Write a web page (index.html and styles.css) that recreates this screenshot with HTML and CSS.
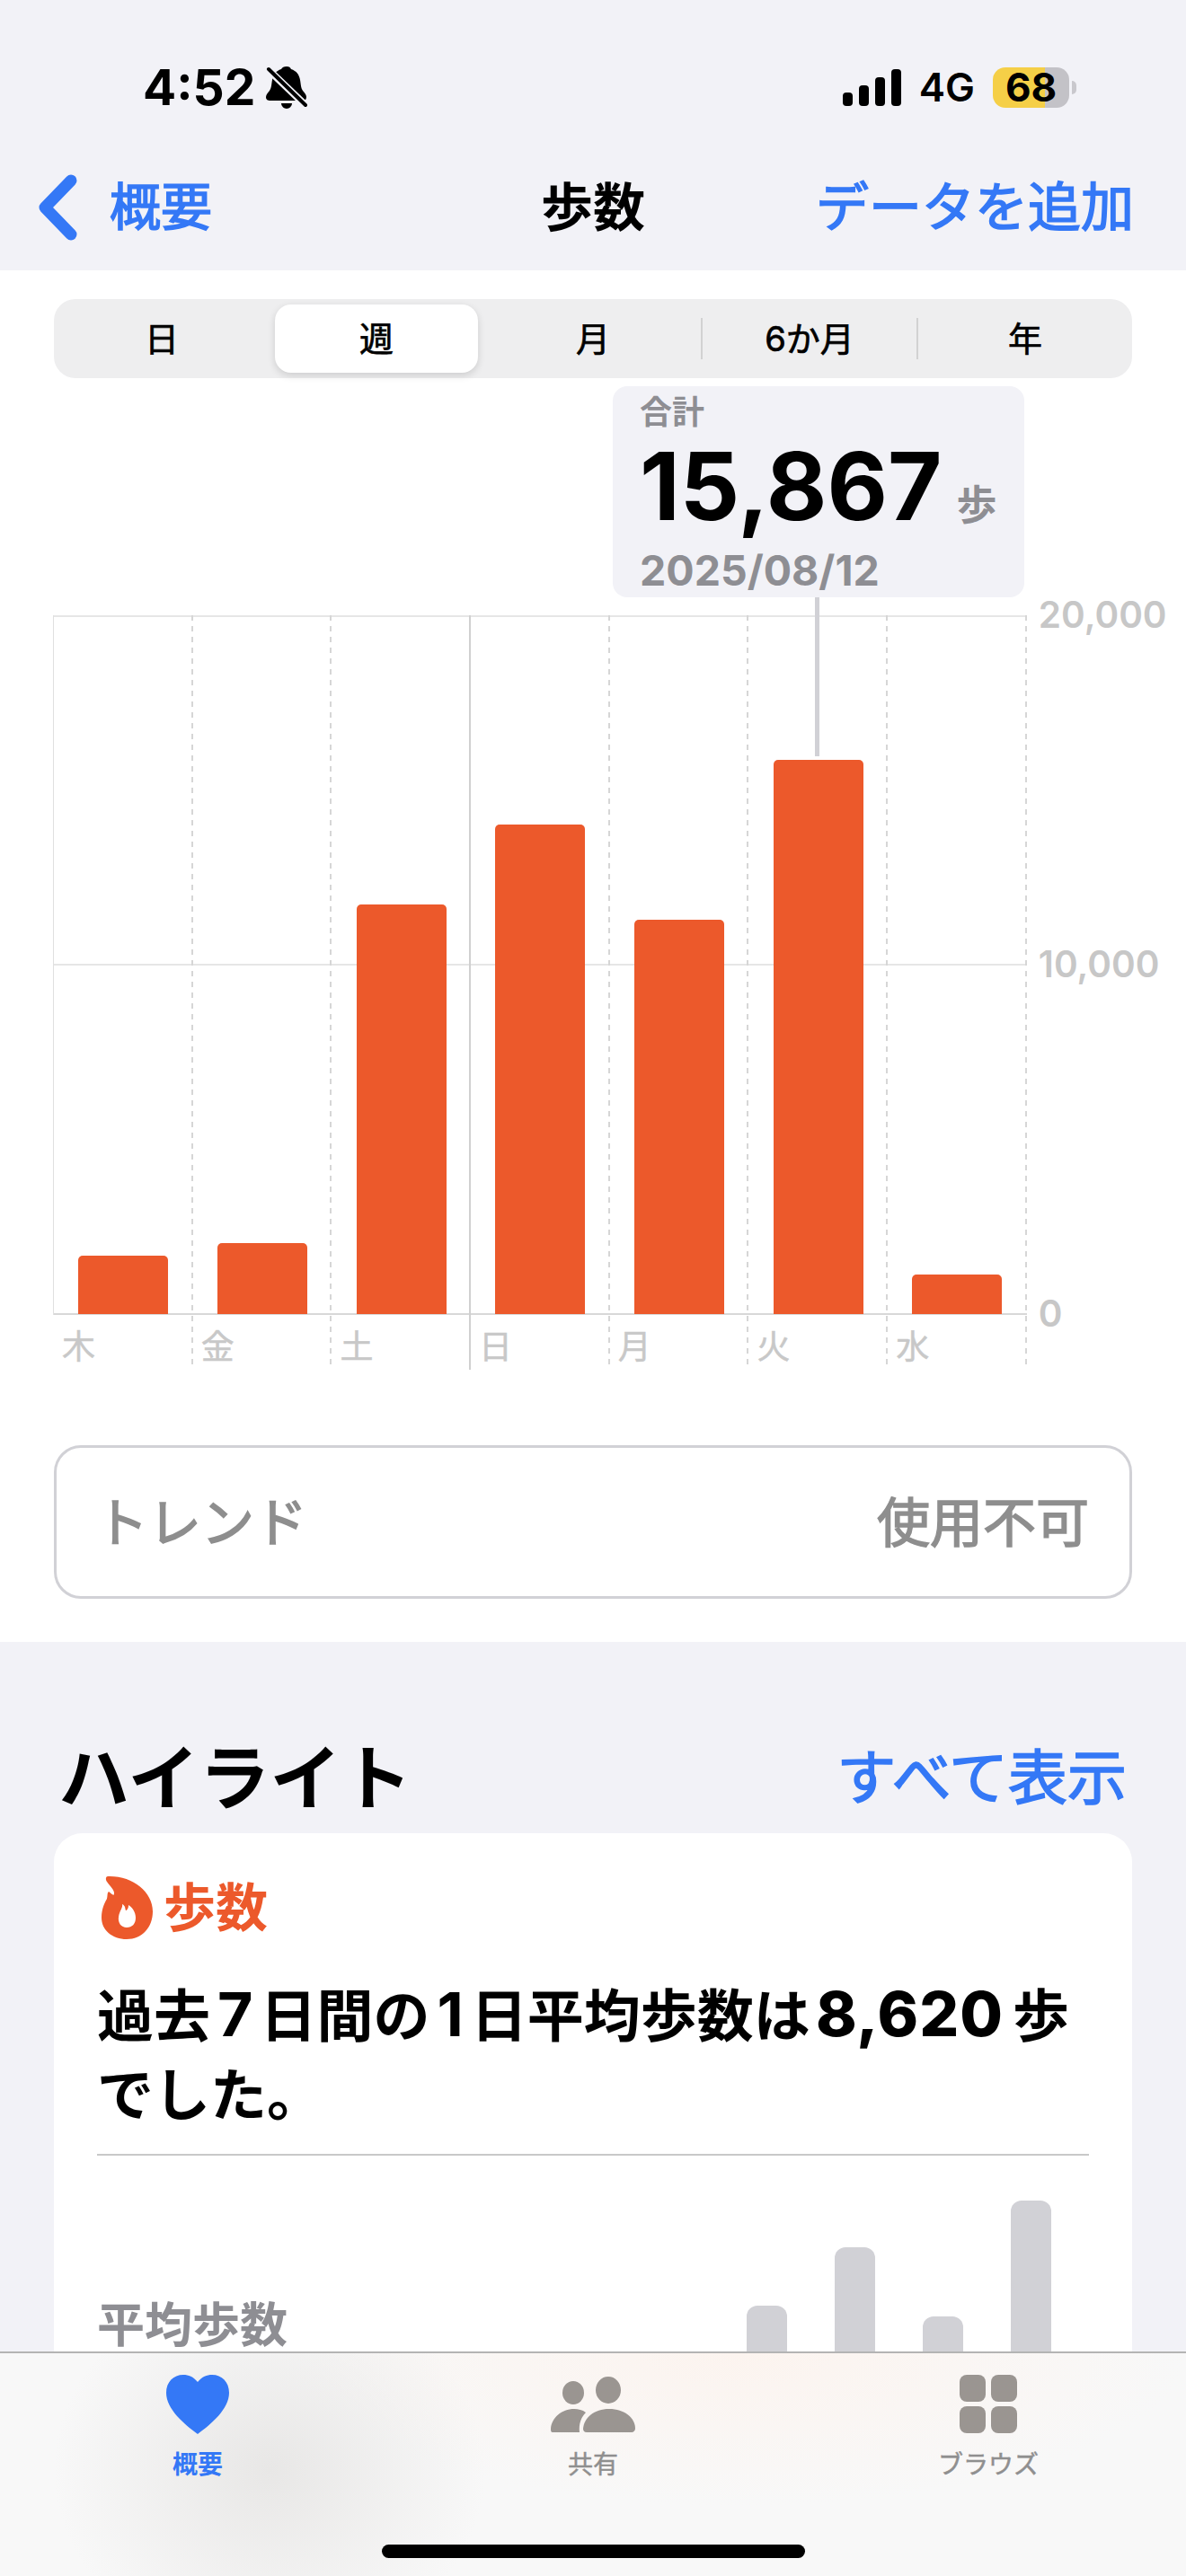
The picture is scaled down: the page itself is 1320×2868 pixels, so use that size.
FILE: index.html

```html
<!DOCTYPE html>
<html lang="ja">
<head>
    <meta charset="UTF-8">
    <meta name="viewport" content="width=device-width, initial-scale=1.0">
    <title>歩数</title>
    <link rel="stylesheet" href="styles.css">
</head>
<body>
    <div class="screen">
        <div class="header">
            <div class="status">
                <div class="status-left">
                    <span class="time">4:52</span>
                    <svg class="bell" width="46" height="47" viewBox="0 0 46 47">
                        <path d="M17 41h12c0 3-3 6-6 6s-6-3-6-6z" fill="#000"/>
                        <path d="M23 0c3 0 4 1 5 3 6 2 9 6 10 12 1 6 1 9 3 12 2 2 4 5 4 7 0 3-2 4-4 4H5c-3 0-5-1-5-4 0-2 2-5 4-7 2-3 2-6 3-12 1-6 4-10 10-12 1-2 3-3 6-3z" fill="#000"/>
                        <path d="M2 3l42 40" stroke="#f2f2f7" stroke-width="8"/>
                        <path d="M3 3l41 40" stroke="#000" stroke-width="4" stroke-linecap="round"/>
                    </svg>
                </div>
                <div class="status-right">
                    <div class="signal">
                        <span class="signal-bar s1"></span>
                        <span class="signal-bar s2"></span>
                        <span class="signal-bar s3"></span>
                        <span class="signal-bar s4"></span>
                    </div>
                    <span class="network">4G</span>
                    <div class="battery"><span class="battery-text">68</span></div>
                    <span class="battery-nub"></span>
                </div>
            </div>
            <div class="nav">
                <div class="nav-back">
                    <svg class="chevron" width="44" height="74" viewBox="0 0 44 74">
                        <path d="M37 7L8 37l29 30" fill="none" stroke="#3478f6" stroke-width="13" stroke-linecap="round" stroke-linejoin="round"/>
                    </svg>
                    <span>概要</span>
                </div>
                <div class="nav-title">歩数</div>
                <div class="nav-action">データを追加</div>
            </div>
        </div>

        <div class="panel">
            <div class="segments">
                <div class="segment">日</div>
                <div class="segment segment-active">週</div>
                <div class="segment">月</div>
                <div class="segment segment-sep">6か月</div>
                <div class="segment segment-sep">年</div>
            </div>

            <div class="chart">
                <div class="callout">
                    <div class="callout-label">合計</div>
                    <div class="callout-value">15,867<span class="callout-unit">歩</span></div>
                    <div class="callout-date">2025/08/12</div>
                </div>
                <div class="callout-stem"></div>

                <div class="plot">
                    <div class="day"><div class="bar-area"><div class="bar" style="height: 65px"></div></div><div class="day-label">木</div></div>
                    <div class="day"><div class="bar-area"><div class="bar" style="height: 79px"></div></div><div class="day-label">金</div></div>
                    <div class="day day-week"><div class="bar-area"><div class="bar" style="height: 456px"></div></div><div class="day-label">土</div></div>
                    <div class="day"><div class="bar-area"><div class="bar" style="height: 545px"></div></div><div class="day-label">日</div></div>
                    <div class="day"><div class="bar-area"><div class="bar" style="height: 439px"></div></div><div class="day-label">月</div></div>
                    <div class="day"><div class="bar-area"><div class="bar" style="height: 617px"></div></div><div class="day-label">火</div></div>
                    <div class="day"><div class="bar-area"><div class="bar" style="height: 44px"></div></div><div class="day-label">水</div></div>
                </div>
                <div class="y-axis">
                    <span>20,000</span>
                    <span>10,000</span>
                    <span>0</span>
                </div>
            </div>

            <div class="trend">
                <span>トレンド</span>
                <span>使用不可</span>
            </div>
        </div>

        <div class="highlights">
            <div class="highlights-head">
                <h2 class="highlights-title">ハイライト</h2>
                <span class="highlights-link">すべて表示</span>
            </div>
            <div class="card">
                <div class="card-tag">
                    <svg class="flame" width="57" height="71" viewBox="0 0 57 71">
                        <path fill-rule="evenodd" fill="#ec592b" d="M7 1C5 1 4 4 6 7c3 5 9 9 8 14-1 2-3-1-6-3-2 2-1 4-2 8-3 5-6 12-6 21 0 14 12 24 28 24 17 0 29-13 29-31C57 18 34 0 7 1zM23 32c1 4-3 7-4 14-1 7 3 12 9 12s10-4 10-11c0-6-4-12-8-14 0 4-2 6-3 6-1-2 0-5-4-7z"/>
                    </svg>
                    <span class="card-tag-text">歩数</span>
                </div>
                <p class="card-text">過去<span class="num">7</span>日間の<span class="num">1</span>日平均歩数は<span class="num num-wide">8,620</span>歩でした。</p>
                <div class="card-rule"></div>
                <div class="card-row">
                    <div class="card-label">平均歩数</div>
                    <div class="spark">
                        <div class="spark-bar" style="height: 83px"></div>
                        <div class="spark-bar" style="height: 148px"></div>
                        <div class="spark-bar" style="height: 71px"></div>
                        <div class="spark-bar" style="height: 200px"></div>
                    </div>
                </div>
            </div>
        </div>

        <div class="tabbar">
            <div class="tabs">
                <div class="tab tab-active">
                    <svg width="70" height="66" viewBox="0 0 70 66">
                        <path fill="#3478f6" d="M35 8C30 2 25 0 19 0 8 0 0 8 0 20c0 18 20 35 35 46 15-11 35-28 35-46C70 8 62 0 51 0c-6 0-11 2-16 8z"/>
                    </svg>
                    <span class="tab-label">概要</span>
                </div>
                <div class="tab">
                    <svg width="94" height="66" viewBox="0 0 94 66">
                        <g fill="#9a9591">
                            <ellipse cx="25" cy="20" rx="12" ry="13"/>
                            <ellipse cx="64" cy="17" rx="14" ry="15"/>
                            <path d="M40 64c-3 0-4-2-4-4 1-12 12-22 29-22s29 10 29 22c0 2-2 4-4 4z"/>
                            <path d="M2 64c-2 0-2-2-2-4 1-12 12-22 26-22 5 0 9 1 13 4-5 5-8 12-7 22z"/>
                        </g>
                    </svg>
                    <span class="tab-label">共有</span>
                </div>
                <div class="tab">
                    <svg width="64" height="66" viewBox="0 0 64 66">
                        <g fill="#9a9591">
                            <rect x="0" y="0" width="29" height="30" rx="8"/>
                            <rect x="35" y="0" width="29" height="30" rx="8"/>
                            <rect x="0" y="35" width="29" height="30" rx="8"/>
                            <rect x="35" y="35" width="29" height="30" rx="8"/>
                        </g>
                    </svg>
                    <span class="tab-label">ブラウズ</span>
                </div>
            </div>
            <div class="home-indicator"></div>
        </div>
    </div>
</body>
</html>
```

FILE: styles.css

```css
body {
    margin: 0;
    font-family: Inter, "Noto Sans CJK JP", sans-serif;
    color: #000;
    background-color: #f2f2f7;
}

.screen {
    position: relative;
    width: 1320px;
    height: 2868px;
    overflow: hidden;
}

/* status bar + nav */
.header {
    height: 301px;
    background-color: #f2f2f7;
    box-sizing: border-box;
    padding-top: 74px;
}

.status {
    display: flex;
    justify-content: space-between;
    align-items: center;
    height: 47px;
    padding: 0 122px 0 159px;
}

.status-left {
    display: flex;
    align-items: center;
    gap: 12px;
}

.time {
    font-size: 55px;
    font-weight: 700;
    line-height: 47px;
}

.status-right {
    display: flex;
    align-items: center;
}

.signal {
    display: flex;
    align-items: flex-end;
    gap: 7px;
    height: 41px;
}

.signal-bar {
    width: 11px;
    background-color: #000;
    border-radius: 4px;
}

.s1 { height: 15px; }
.s2 { height: 23px; }
.s3 { height: 32px; }
.s4 { height: 41px; }

.network {
    font-size: 44px;
    font-weight: 600;
    line-height: 47px;
    margin: 0 20px 0 20px;
}

.battery {
    width: 85px;
    height: 45px;
    border-radius: 14px;
    background: linear-gradient(90deg, #f5cf47 0 58px, #c3c2c7 58px);
    text-align: center;
}

.battery-text {
    font-size: 44px;
    font-weight: 700;
    line-height: 45px;
}

.battery-nub {
    width: 5px;
    height: 15px;
    margin-left: 3px;
    background-color: #c9c8cd;
    border-radius: 0 8px 8px 0;
}

.nav {
    display: grid;
    grid-template-columns: 1fr auto 1fr;
    align-items: center;
    height: 74px;
    margin-top: 73px;
    padding: 0 62px 0 62px;
    font-size: 59px;
    line-height: 74px;
    color: #3478f6;
    -webkit-text-stroke: 1.6px #3478f6;
}

.nav-back {
    display: flex;
    align-items: center;
    gap: 36px;
    margin-left: -20px;
    font-size: 57px;
}

.nav-title {
    color: #000;
    font-size: 58px;
    font-weight: 700;
    -webkit-text-stroke: 0;
}

.nav-action {
    margin-right: -4px;
    text-align: right;
    white-space: nowrap;
}

/* white panel with the chart */
.panel {
    height: 1527px;
    background-color: #fff;
    box-sizing: border-box;
    padding-top: 32px;
}

.segments {
    display: grid;
    grid-template-columns: repeat(5, 1fr);
    align-items: center;
    height: 88px;
    margin: 0 60px;
    background-color: #eeeeef;
    border-radius: 24px;
}

.segment {
    height: 46px;
    font-size: 38px;
    line-height: 46px;
    text-align: center;
    -webkit-text-stroke: 0.7px #000;
}

.segment-active {
    height: 76px;
    margin: 0 8px 0 6px;
    line-height: 76px;
    background-color: #fff;
    border-radius: 18px;
    box-shadow: 0 3px 8px rgba(0, 0, 0, 0.14);
}

.segment-sep {
    border-left: 2px solid #d2d2d2;
}

.chart {
    position: relative;
    display: flex;
    margin: 264px 0 0 59px;
}

.callout {
    position: absolute;
    left: 623px;
    top: -255px;
    width: 458px;
    height: 235px;
    box-sizing: border-box;
    padding: 6px 30px 0;
    background-color: #f2f2f7;
    border-radius: 16px;
    color: #8e8e93;
}

.callout-label {
    font-size: 36px;
    font-weight: 700;
    line-height: 46px;
}

.callout-value {
    margin-top: 9px;
    font-size: 104px;
    font-weight: 700;
    line-height: 100px;
    white-space: nowrap;
    color: #000;
}

.callout-unit {
    margin-left: 16px;
    font-size: 45px;
    color: #8e8e93;
}

.callout-date {
    margin-top: -4px;
    font-size: 46.5px;
    font-weight: 700;
    line-height: 52px;
}

.callout-stem {
    position: absolute;
    left: 848px;
    top: -20px;
    width: 5px;
    height: 177px;
    background-color: #d1d1d6;
}

.plot {
    display: grid;
    grid-template-columns: repeat(7, 154.7px);
    height: 840px;
    border-left: 1px solid #e0e0e0;
    border-image: linear-gradient(#e0e0e0 0 778px, transparent 778px) 1;
    background:
        linear-gradient(#e6e6e6, #e6e6e6) 0 0 / 100% 2px no-repeat,
        linear-gradient(#e6e6e6, #e6e6e6) 0 388px / 100% 2px no-repeat,
        linear-gradient(#d8d8d8, #d8d8d8) 0 777px / 100% 2px no-repeat;
}

.day {
    background: repeating-linear-gradient(#d6d6d6 0 6px, transparent 6px 12px) right top / 2px 100% no-repeat;
}

.day-week {
    background: linear-gradient(#d0d0d0, #d0d0d0) right top / 2px 100% no-repeat;
}

.bar-area {
    display: flex;
    align-items: flex-end;
    justify-content: center;
    height: 778px;
}

.bar {
    width: 100px;
    background-color: #ec592b;
    border-radius: 5px 5px 0 0;
}

.day-label {
    padding: 15px 0 0 9px;
    font-size: 37px;
    line-height: 44px;
    color: #c8c8c8;
    -webkit-text-stroke: 0.5px #c8c8c8;
}

.y-axis {
    display: flex;
    flex-direction: column;
    justify-content: space-between;
    height: 778px;
    margin-left: 13px;
    font-size: 40.5px;
    font-weight: 600;
    color: #c7c7c7;
}

.y-axis span {
    line-height: 0;
}

.trend {
    display: flex;
    justify-content: space-between;
    align-items: center;
    height: 171px;
    box-sizing: border-box;
    margin: 84px 60px 0;
    padding: 0 45px 6px 43px;
    border: 3px solid #d1d1d6;
    border-radius: 30px;
    font-size: 59px;
    color: #8e8e8e;
    -webkit-text-stroke: 1.6px #8e8e8e;
}

/* highlights */
.highlights-head {
    display: flex;
    justify-content: space-between;
    align-items: center;
    height: 108px;
    padding: 92px 66px 0 65px;
    margin-bottom: 13px;
}

.highlights-title {
    margin: 0;
    font-size: 79px;
    font-weight: 700;
}

.highlights-link {
    font-size: 66px;
    color: #3478f6;
    -webkit-text-stroke: 1.6px #3478f6;
}

.card {
    margin: 0 60px;
    padding: 45px 48px 0;
    background-color: #fff;
    border-radius: 32px;
}

.card-tag {
    display: flex;
    align-items: center;
    gap: 12px;
    margin-left: 5px;
    font-size: 58px;
    font-weight: 700;
    line-height: 71px;
    color: #ec592b;
}

.card-tag-text {
    padding-top: 3px;
}

.card-text {
    margin: 38px 0 0;
    font-size: 63px;
    font-weight: 700;
    line-height: 88px;
}

.num {
    margin: 0 8px;
    font-size: 68px;
}

.num-wide {
    margin: 0 10px 0 6px;
    font-size: 69px;
    font-weight: 800;
    letter-spacing: 1px;
}

.card-rule {
    height: 2px;
    margin-top: 22px;
    background-color: #c8c8c8;
}

.card-row {
    display: flex;
    justify-content: space-between;
    padding-right: 42px;
}

.card-label {
    margin-top: 157px;
    font-size: 53px;
    font-weight: 700;
    line-height: 64px;
    color: #8e8e93;
}

.spark {
    display: flex;
    align-items: flex-end;
    gap: 53px;
    height: 250px;
}

.spark-bar {
    width: 45px;
    background-color: #d1d1d6;
    border-radius: 12px 12px 0 0;
}

/* tab bar lies over the scrolling content */
.tabbar {
    position: absolute;
    left: 0;
    right: 0;
    bottom: 0;
    height: 250px;
    box-sizing: border-box;
    border-top: 2px solid #b4b4b4;
    background:
        radial-gradient(ellipse 240px 210px at 300px 130px, #e8e7e6 0%, rgba(232, 231, 230, 0) 100%),
        radial-gradient(ellipse 500px 170px at 820px 0px, #fcf4ef 0%, rgba(252, 244, 239, 0) 100%),
        #f8f8f8;
}

.tabs {
    display: grid;
    grid-template-columns: repeat(3, 440px);
    padding-top: 24px;
}

.tab {
    display: flex;
    flex-direction: column;
    align-items: center;
}

.tab-label {
    margin-top: 16px;
    font-size: 28px;
    line-height: 36px;
    color: #8f8f8f;
    -webkit-text-stroke: 0.5px #8f8f8f;
}

.tab-active .tab-label {
    font-weight: 700;
    color: #3478f6;
    -webkit-text-stroke: 0;
}

.home-indicator {
    width: 471px;
    height: 15px;
    margin: 71px auto 0;
    background-color: #000;
    border-radius: 8px;
}
```
